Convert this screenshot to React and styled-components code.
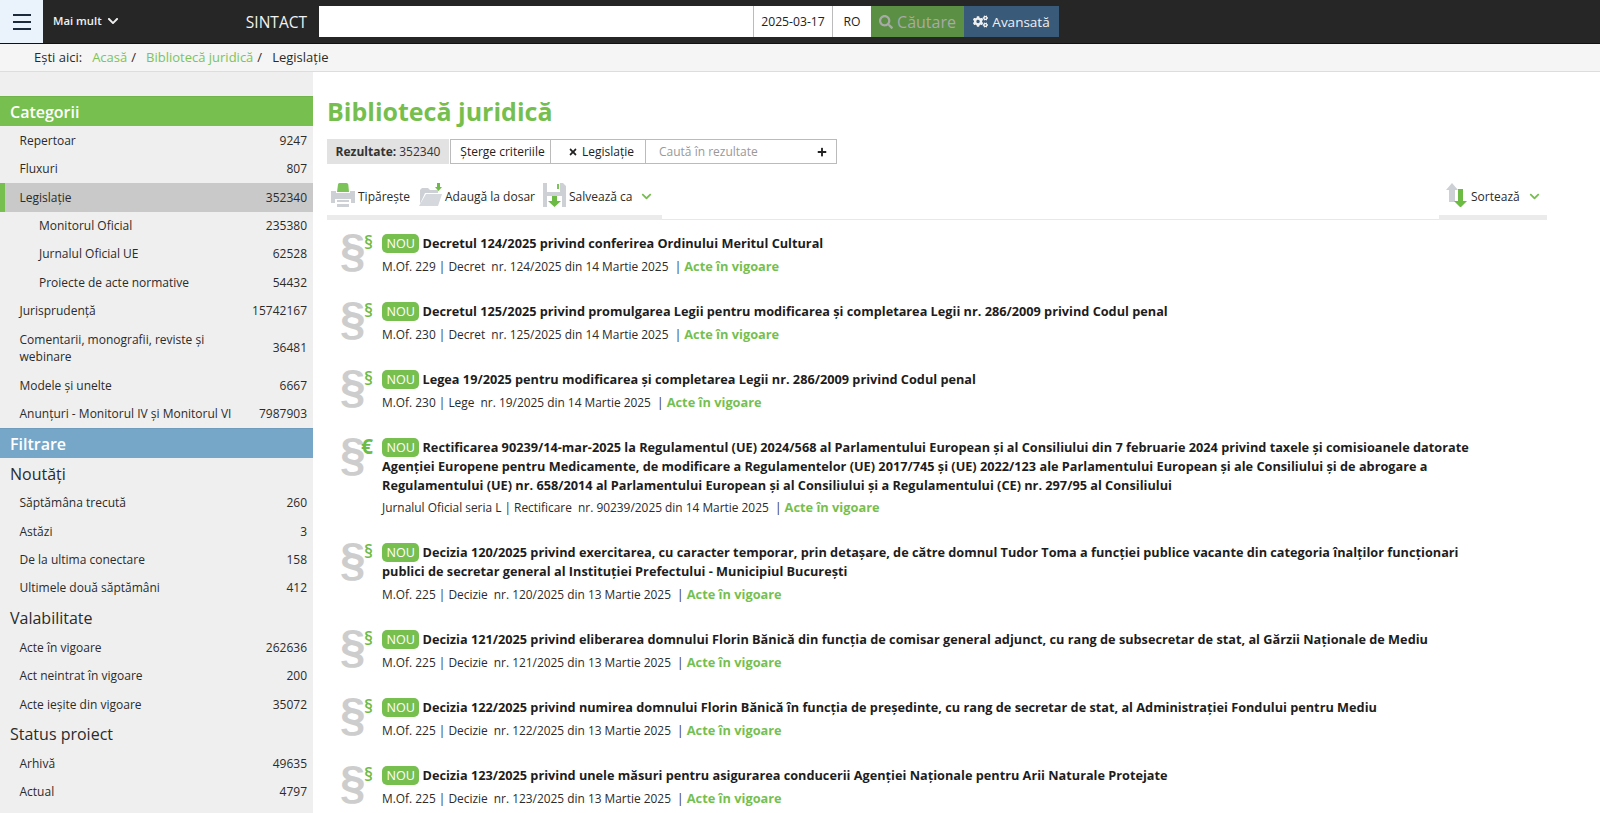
import React from 'react';
import styled, { createGlobalStyle } from 'styled-components';
import { FaChevronDown, FaSearch, FaCogs, FaTimes, FaPlus } from 'react-icons/fa';

const GlobalStyle = createGlobalStyle`
  html, body {
    margin: 0;
    height: 100%;
    overflow: hidden;
    background: #fff;
    font-family: "Open Sans", "Liberation Sans", sans-serif;
    color: #222;
  }
  * { box-sizing: border-box; }
`;

const Page = styled.div`
  height: 813px;
  display: flex;
  flex-direction: column;
  overflow: hidden;
`;

const TopBar = styled.header`
  height: 44px;
  flex: none;
  display: flex;
  background: #262626;
  border-bottom: 1px solid #111;
`;

const MenuButton = styled.div`
  width: 43px;
  display: flex;
  flex-direction: column;
  align-items: center;
  justify-content: center;
  gap: 5px;
  background: #eaf2fb;
  span {
    display: block;
    width: 18px;
    height: 2px;
    background: #1c2b3c;
  }
`;

const MoreLink = styled.div`
  width: 145px;
  padding-left: 10px;
  padding-bottom: 2px;
  display: flex;
  align-items: center;
  gap: 5px;
  color: #f0f0f0;
  font-size: 11.3px;
  font-weight: 600;
`;

const Brand = styled.div`
  width: 131px;
  padding-right: 12px;
  display: flex;
  align-items: center;
  justify-content: flex-end;
  color: #f2f2f2;
  font-size: 15.5px;
  font-weight: 400;
`;

const SearchWrap = styled.div`
  margin-top: 6px;
  height: 31px;
  display: flex;
`;

const SearchInput = styled.div`
  width: 434px;
  background: #fff;
`;

const SearchCell = styled.div`
  width: ${(p) => p.$w}px;
  background: #fff;
  border-left: 1px solid #bbb;
  display: flex;
  align-items: center;
  justify-content: center;
  font-size: 12.2px;
  color: #222;
`;

const SearchButton = styled.div`
  width: ${(p) => p.$w}px;
  background: ${(p) => p.$bg};
  color: ${(p) => p.$color};
  font-size: ${(p) => p.$size}px;
  display: flex;
  align-items: center;
  justify-content: center;
  gap: 4px;
`;

const Crumbs = styled.nav`
  height: 28px;
  flex: none;
  padding-left: 34px;
  padding-bottom: 2px;
  display: flex;
  align-items: center;
  background: #f5f5f5;
  border-bottom: 1px solid #ddd;
  font-size: 13px;
  color: #2b2b2b;
`;

const CrumbLabel = styled.span`
  margin-right: 10px;
`;

const CrumbLink = styled.a`
  color: #7cc35a;
  margin-right: 4px;
`;

const CrumbSep = styled.span`
  margin-right: 10px;
`;

const Body = styled.div`
  flex: 1;
  display: flex;
  min-height: 0;
`;

const Sidebar = styled.aside`
  width: 313px;
  flex: none;
  padding-top: 24px;
  background: #efefef;
`;

const PanelTitle = styled.div`
  height: 30px;
  padding-left: 10px;
  display: flex;
  align-items: center;
  background: ${(p) => p.$bg};
  color: #fff;
  font-size: 16px;
  font-weight: 600;
  border-top: 1px solid rgba(0, 0, 0, 0.06);
`;

const RowList = styled.div`
  padding-top: ${(p) => p.$top || 0}px;
`;

const Row = styled.div`
  height: ${(p) => (p.$tall ? 46 : 28.4)}px;
  padding: 0 6px 1px ${(p) => (p.$active ? 14.5 : p.$sub ? 39 : 19.5)}px;
  display: flex;
  align-items: center;
  justify-content: space-between;
  font-size: 12px;
  line-height: 17px;
  color: #2b2b2b;
  background: ${(p) => (p.$active ? '#c9c9c9' : 'transparent')};
  border-left: ${(p) => (p.$active ? '5px solid #77c04f' : 'none')};
`;

const RowLabel = styled.span`
  max-width: ${(p) => (p.$wide ? 'none' : '225px')};
`;

const GroupTitle = styled.div`
  height: 31px;
  padding-left: 10px;
  display: flex;
  align-items: center;
  font-size: 16px;
  color: #2b2b2b;
`;

const Main = styled.main`
  flex: 1;
  min-width: 0;
  padding: 0 0 0 14px;
`;

const Title = styled.h1`
  margin: 22px 0 0;
  font-size: 25px;
  line-height: 34px;
  font-weight: 700;
  color: #76bf4e;
`;

const ResultBar = styled.div`
  margin-top: 11px;
  height: 25px;
  display: flex;
  font-size: 12px;
`;

const ResultCount = styled.div`
  width: 122px;
  background: #e2e2e2;
  display: flex;
  align-items: center;
  justify-content: center;
  gap: 3px;
  color: #333;
  b { font-weight: 700; }
`;

const ResultBox = styled.div`
  margin-left: 1px;
  display: flex;
  border: 1px solid #bbb;
`;

const ResultCell = styled.div`
  width: ${(p) => p.$w}px;
  padding: 0 ${(p) => p.$right || 0}px 0 ${(p) => p.$left || 0}px;
  display: flex;
  align-items: center;
  justify-content: ${(p) => (p.$between ? 'space-between' : 'center')};
  gap: 4px;
  color: ${(p) => (p.$muted ? '#999' : '#222')};
  border-right: ${(p) => (p.$last ? 'none' : '1px solid #bbb')};
`;

const Toolbar = styled.div`
  margin-top: 11px;
  width: 1220px;
  height: 45px;
  display: flex;
  justify-content: space-between;
  border-bottom: 1px solid #e8e8e8;
`;

const ToolGroup = styled.div`
  width: ${(p) => p.$w}px;
  height: 45px;
  display: flex;
  align-items: flex-start;
  padding-top: 8px;
  padding-left: ${(p) => p.$pad}px;
  border-bottom: 5px solid #ebebeb;
  font-size: 12px;
  color: #2b2b2b;
`;

const Tool = styled.div`
  display: flex;
  align-items: center;
  margin-right: ${(p) => p.$mr || 0}px;
  height: 24px;
  gap: 3px;
  svg { flex: none; }
`;

const ToolLabel = styled.span`
  margin-top: 2px;
`;

const ChevronMark = styled.span`
  display: flex;
  color: #76bf4e;
  margin-left: 6px;
  margin-top: 2px;
`;

const List = styled.div`
  margin-top: 14px;
  padding-left: 13px;
  width: 1150px;
`;

const Item = styled.article`
  position: relative;
  padding-left: 42px;
  margin-bottom: 26px;
`;

const Glyphs = styled.div`
  position: absolute;
  left: 0;
  top: -9px;
  width: 40px;
  height: 50px;
`;

const BigGlyph = styled.span`
  position: absolute;
  left: 0;
  top: 0;
  font-family: "Liberation Sans", sans-serif;
  font-size: 46px;
  line-height: 50px;
  font-weight: 700;
  color: #cdcdcd;
`;

const SmallGlyph = styled.span`
  position: absolute;
  left: ${(p) => (p.$euro ? 21 : 24)}px;
  top: 7px;
  font-size: ${(p) => (p.$euro ? 21 : 18)}px;
  line-height: 20px;
  font-weight: ${(p) => (p.$euro ? 700 : 600)};
  color: #6dbb45;
`;

const ItemTitle = styled.div`
  font-size: 12.72px;
  line-height: 18.7px;
  font-weight: 700;
  color: #1d1d1d;
`;

const Badge = styled.span`
  display: inline-block;
  vertical-align: top;
  height: 19px;
  line-height: 19px;
  padding: 0 4.5px;
  margin-right: 3px;
  border-radius: 5px;
  background: #77c04f;
  color: #fff;
  font-size: 12.6px;
  font-weight: 400;
`;

const Meta = styled.div`
  margin-top: 3px;
  font-size: 11.9px;
  line-height: 20px;
  color: #2b2b2b;
  white-space: pre;
  b {
    color: #76bf4e;
    font-size: 12.8px;
    font-weight: 700;
  }
`;

const PrinterIcon = () => (
  <svg width="24" height="24" viewBox="0 0 24 24">
    <path d="M7 1.5Q7 0 8.5 0h7Q17 0 17.300 1.500L18 9H6z" fill="#7cc35a" />
    <path d="M0 8h5v2h14V8h5v12h-4v-4H4v4H0z" fill="#cdd0d4" />
    <path d="M6 17h12v2H6zM6 21h12v3H6z" fill="#cdd0d4" />
  </svg>
);

const FolderIcon = () => (
  <svg width="24" height="24" viewBox="0 0 24 24">
    <path d="M2 7l2-2h6l2 2h8v3H7L2 21z" fill="#cdd0d4" />
    <path d="M8 11h16l-4 12H1z" fill="#d5d8dc" />
    <path d="M19 0h3v4h2l-3.500 4L17 4h2z" fill="#6dbb45" />
  </svg>
);

const SaveIcon = () => (
  <svg width="23" height="24" viewBox="0 0 23 24">
    <path d="M0 0h4v9h13V0h3l3 3v21h-4V13H4v11H0z" fill="#cdd0d4" />
    <path d="M14 1h2v5h-2z" fill="#7cc35a" />
    <path d="M9 13h5v5h4l-6.500 6L5 18h4z" fill="#6dbb45" />
  </svg>
);

const SortIcon = () => (
  <svg width="22" height="24" viewBox="0 0 22 24">
    <path d="M6 0l6 7H9v12H3V7H0z" fill="#cdd0d4" />
    <path d="M12 6h5v12h4l-6.500 6.500L8 18h4z" fill="#6dbb45" />
  </svg>
);

const categories = [
  { label: 'Repertoar', count: '9247' },
  { label: 'Fluxuri', count: '807' },
  { label: 'Legislație', count: '352340', active: true },
  { label: 'Monitorul Oficial', count: '235380', sub: true },
  { label: 'Jurnalul Oficial UE', count: '62528', sub: true },
  { label: 'Proiecte de acte normative', count: '54432', sub: true },
  { label: 'Jurisprudență', count: '15742167' },
  { label: 'Comentarii, monografii, reviste și webinare', count: '36481', tall: true },
  { label: 'Modele și unelte', count: '6667' },
  { label: 'Anunțuri - Monitorul IV și Monitorul VI', count: '7987903', wide: true },
];

const filters = [
  {
    title: 'Noutăți',
    rows: [
      ['Săptămâna trecută', '260'],
      ['Astăzi', '3'],
      ['De la ultima conectare', '158'],
      ['Ultimele două săptămâni', '412'],
    ],
  },
  {
    title: 'Valabilitate',
    rows: [
      ['Acte în vigoare', '262636'],
      ['Act neintrat în vigoare', '200'],
      ['Acte ieșite din vigoare', '35072'],
    ],
  },
  {
    title: 'Status proiect',
    rows: [
      ['Arhivă', '49635'],
      ['Actual', '4797'],
    ],
  },
];

const results = [
  {
    title: 'Decretul 124/2025 privind conferirea Ordinului Meritul Cultural',
    meta: 'M.Of. 229 | Decret  nr. 124/2025 din 14 Martie 2025  | ',
  },
  {
    title: 'Decretul 125/2025 privind promulgarea Legii pentru modificarea și completarea Legii nr. 286/2009 privind Codul penal',
    meta: 'M.Of. 230 | Decret  nr. 125/2025 din 14 Martie 2025  | ',
  },
  {
    title: 'Legea 19/2025 pentru modificarea și completarea Legii nr. 286/2009 privind Codul penal',
    meta: 'M.Of. 230 | Lege  nr. 19/2025 din 14 Martie 2025  | ',
  },
  {
    title: 'Rectificarea 90239/14-mar-2025 la Regulamentul (UE) 2024/568 al Parlamentului European și al Consiliului din 7 februarie 2024 privind taxele și comisioanele datorate Agenției Europene pentru Medicamente, de modificare a Regulamentelor (UE) 2017/745 și (UE) 2022/123 ale Parlamentului European și ale Consiliului și de abrogare a Regulamentului (UE) nr. 658/2014 al Parlamentului European și al Consiliului și a Regulamentului (CE) nr. 297/95 al Consiliului',
    meta: 'Jurnalul Oficial seria L | Rectificare  nr. 90239/2025 din 14 Martie 2025  | ',
    euro: true,
  },
  {
    title: 'Decizia 120/2025 privind exercitarea, cu caracter temporar, prin detașare, de către domnul Tudor Toma a funcției publice vacante din categoria înalților funcționari publici de secretar general al Instituției Prefectului - Municipiul București',
    meta: 'M.Of. 225 | Decizie  nr. 120/2025 din 13 Martie 2025  | ',
  },
  {
    title: 'Decizia 121/2025 privind eliberarea domnului Florin Bănică din funcția de comisar general adjunct, cu rang de subsecretar de stat, al Gărzii Naționale de Mediu',
    meta: 'M.Of. 225 | Decizie  nr. 121/2025 din 13 Martie 2025  | ',
  },
  {
    title: 'Decizia 122/2025 privind numirea domnului Florin Bănică în funcția de președinte, cu rang de secretar de stat, al Administrației Fondului pentru Mediu',
    meta: 'M.Of. 225 | Decizie  nr. 122/2025 din 13 Martie 2025  | ',
  },
  {
    title: 'Decizia 123/2025 privind unele măsuri pentru asigurarea conducerii Agenției Naționale pentru Arii Naturale Protejate',
    meta: 'M.Of. 225 | Decizie  nr. 123/2025 din 13 Martie 2025  | ',
  },
];

export default function App() {
  return (
    <Page>
      <GlobalStyle />
      <TopBar>
        <MenuButton><span /><span /><span /></MenuButton>
        <MoreLink>Mai mult <FaChevronDown size={12} /></MoreLink>
        <Brand>SINTACT</Brand>
        <SearchWrap>
          <SearchInput />
          <SearchCell $w={79}>2025-03-17</SearchCell>
          <SearchCell $w={39}>RO</SearchCell>
          <SearchButton $w={93} $bg="#5b8f44" $color="#a9a9a9" $size={16}><FaSearch size={14} />Căutare</SearchButton>
          <SearchButton $w={95} $bg="#3a5a7a" $color="#f0f0f0" $size={13.5}><FaCogs size={15} />Avansată</SearchButton>
        </SearchWrap>
      </TopBar>
      <Crumbs>
        <CrumbLabel>Ești aici:</CrumbLabel>
        <CrumbLink>Acasă</CrumbLink><CrumbSep>/</CrumbSep>
        <CrumbLink>Bibliotecă juridică</CrumbLink><CrumbSep>/</CrumbSep>
        <span>Legislație</span>
      </Crumbs>
      <Body>
        <Sidebar>
          <PanelTitle $bg="#77c04f">Categorii</PanelTitle>
          <RowList $top={0.6}>
            {categories.map((c) => (
              <Row key={c.label} $active={c.active} $sub={c.sub} $tall={c.tall}>
                <RowLabel $wide={c.wide}>{c.label}</RowLabel>
                <span>{c.count}</span>
              </Row>
            ))}
          </RowList>
          <PanelTitle $bg="#76a7c9">Filtrare</PanelTitle>
          {filters.map((g) => (
            <RowList key={g.title}>
              <GroupTitle>{g.title}</GroupTitle>
              {g.rows.map(([label, count]) => (
                <Row key={label}>
                  <RowLabel>{label}</RowLabel>
                  <span>{count}</span>
                </Row>
              ))}
            </RowList>
          ))}
        </Sidebar>
        <Main>
          <Title>Bibliotecă juridică</Title>
          <ResultBar>
            <ResultCount><b>Rezultate:</b> 352340</ResultCount>
            <ResultBox>
              <ResultCell $w={100} $left={4}>Șterge criteriile</ResultCell>
              <ResultCell $w={95} $left={6}><FaTimes size={10} />Legislație</ResultCell>
              <ResultCell $w={190} $left={13} $right={9} $muted $last $between>
                Caută în rezultate
                <FaPlus size={10} color="#222" />
              </ResultCell>
            </ResultBox>
          </ResultBar>
          <Toolbar>
            <ToolGroup $w={335} $pad={4}>
              <Tool $mr={8}><PrinterIcon /><ToolLabel>Tipărește</ToolLabel></Tool>
              <Tool $mr={8}><FolderIcon /><ToolLabel>Adaugă la dosar</ToolLabel></Tool>
              <Tool><SaveIcon /><ToolLabel>Salvează ca</ToolLabel><ChevronMark><FaChevronDown size={11} /></ChevronMark></Tool>
            </ToolGroup>
            <ToolGroup $w={108} $pad={7}>
              <Tool><SortIcon /><ToolLabel>Sortează</ToolLabel><ChevronMark><FaChevronDown size={11} /></ChevronMark></Tool>
            </ToolGroup>
          </Toolbar>
          <List>
            {results.map((r) => (
              <Item key={r.title}>
                <Glyphs>
                  <BigGlyph>§</BigGlyph>
                  <SmallGlyph $euro={r.euro}>{r.euro ? '€' : '§'}</SmallGlyph>
                </Glyphs>
                <ItemTitle><Badge>NOU</Badge>{r.title}</ItemTitle>
                <Meta>{r.meta}<b>Acte în vigoare</b></Meta>
              </Item>
            ))}
          </List>
        </Main>
      </Body>
    </Page>
  );
}
